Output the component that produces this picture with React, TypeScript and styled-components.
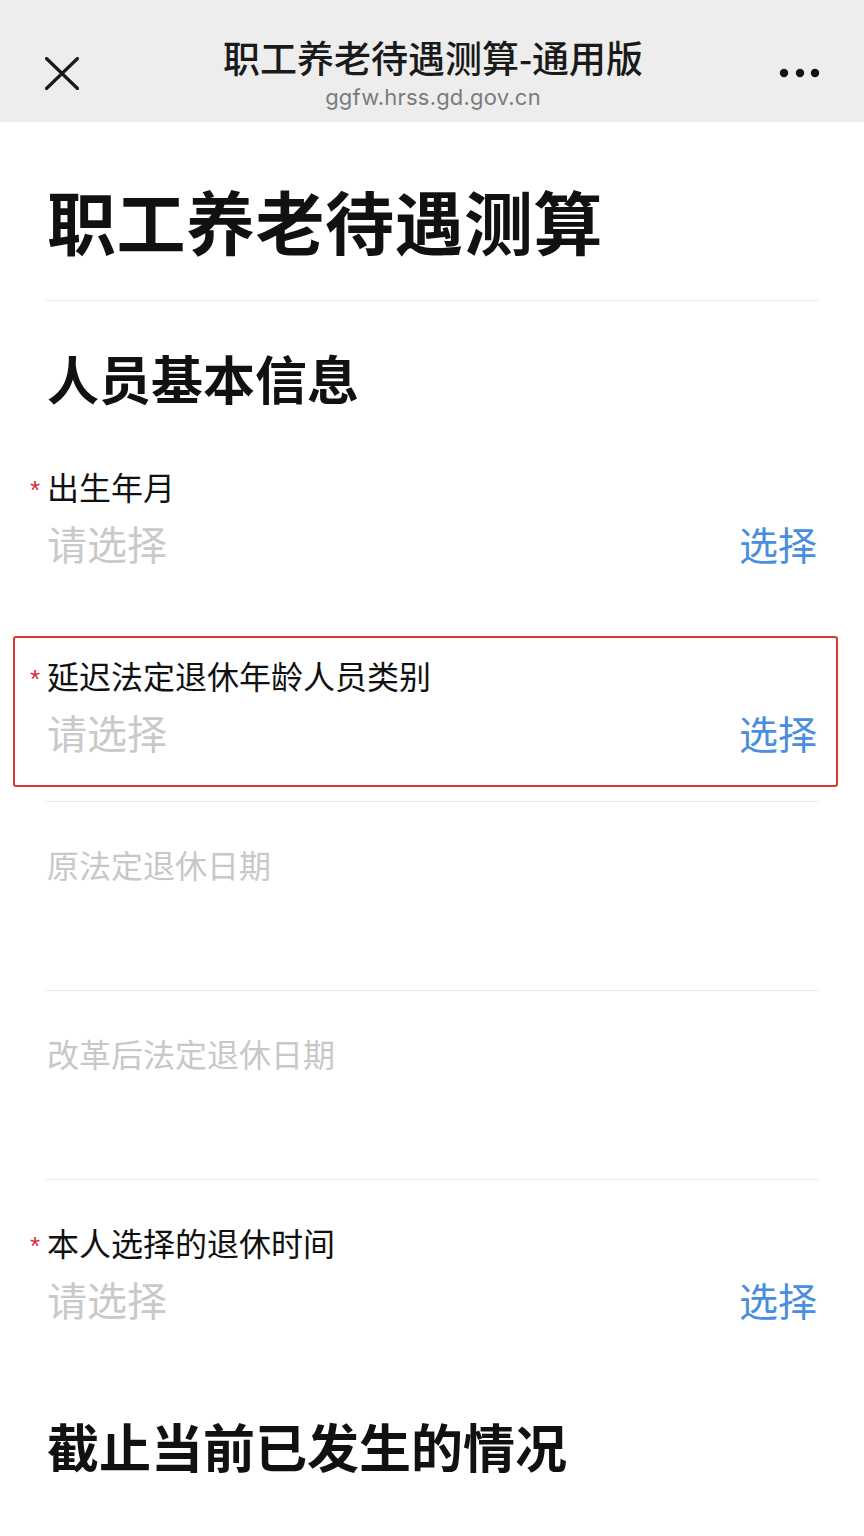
import React from "react";
import styled, { createGlobalStyle } from "styled-components";

const GlobalStyle = createGlobalStyle`
  html, body {
    margin: 0;
    padding: 0;
    background: #ffffff;
  }
  body {
    font-family: "Noto Sans CJK SC", "Noto Sans", sans-serif;
    color: #111111;
  }
  * { box-sizing: border-box; }
`;

const Page = styled.div`
  width: 864px;
  min-height: 1536px;
  background: #ffffff;
  overflow: hidden;
`;

const NavBar = styled.header`
  height: 122px;
  background: #ededed;
  display: grid;
  grid-template-columns: 48px 1fr 48px;
  align-items: start;
  padding: 0 40px 0 42px;
`;

const IconButton = styled.div<{ $align: "start" | "center" }>`
  width: 48px;
  height: 48px;
  display: flex;
  align-items: center;
  justify-content: ${(p) => (p.$align === "start" ? "flex-start" : "center")};
  padding-left: ${(p) => (p.$align === "start" ? "3px" : "0")};
  margin-top: 49px;
`;

const NavTitleBlock = styled.div`
  display: flex;
  flex-direction: column;
  align-items: center;
  padding-top: 38px;
`;

const NavTitle = styled.div`
  font-family: "Noto Sans CJK SC", sans-serif;
  font-size: 37px;
  line-height: 38px;
  font-weight: 500;
  color: #1a1a1a;
  white-space: nowrap;
`;

const NavUrl = styled.div`
  margin-top: 8px;
  font-family: "Inter", "Roboto", sans-serif;
  font-size: 22px;
  line-height: 26px;
  color: #7b7b7b;
  letter-spacing: 0.2px;
`;

const Content = styled.main`
  padding: 0 45px;
`;

const PageTitle = styled.h1`
  margin: 0;
  padding: 64px 0 45px 2px;
  font-size: 69px;
  line-height: 69px;
  font-weight: 700;
  letter-spacing: 0.5px;
  color: #111111;
  border-bottom: 1px solid #eeeeee;
`;

const SectionTitle = styled.h2<{ $top: number }>`
  margin: 0;
  padding: ${(p) => p.$top}px 0 20px 2px;
  font-size: 52px;
  line-height: 52px;
  font-weight: 700;
  color: #111111;
`;

const Field = styled.div<{ $divider: boolean }>`
  position: relative;
  padding: 46px 0 49px 2px;
  border-bottom: 1px solid ${(p) => (p.$divider ? "#ececec" : "transparent")};
`;

const Label = styled.div<{ $muted?: boolean }>`
  display: flex;
  align-items: flex-start;
  height: 32px;
  font-size: 32px;
  line-height: 32px;
  color: ${(p) => (p.$muted ? "#c8c8c8" : "#111111")};
`;

const Star = styled.span`
  flex: none;
  width: 17px;
  margin-left: -17px;
  padding-top: 9px;
  height: 32px;
  color: #d8283a;
  font-family: "Liberation Sans", sans-serif;
  font-size: 26px;
  line-height: 23px;
  text-align: left;
  overflow: visible;
`;

const ValueRow = styled.div`
  margin-top: 21px;
  height: 40px;
  display: flex;
  justify-content: space-between;
  align-items: center;
`;

const Placeholder = styled.span`
  font-size: 40px;
  line-height: 40px;
  color: #c9c9c9;
`;

const PickButton = styled.span`
  font-size: 39px;
  line-height: 40px;
  color: #4a8ee0;
  margin-right: 2px;
`;

const Highlight = styled.div`
  position: absolute;
  top: 23px;
  left: -32px;
  right: -19px;
  height: 151px;
  border: 2.5px solid #d63a2e;
  border-radius: 3px;
  pointer-events: none;
`;

type FieldDef = {
  label: string;
  required: boolean;
  selectable: boolean;
  divider: boolean;
  highlight?: boolean;
};

const fields: FieldDef[] = [
  { label: "出生年月", required: true, selectable: true, divider: false },
  {
    label: "延迟法定退休年龄人员类别",
    required: true,
    selectable: true,
    divider: true,
    highlight: true,
  },
  { label: "原法定退休日期", required: false, selectable: false, divider: true },
  { label: "改革后法定退休日期", required: false, selectable: false, divider: true },
  { label: "本人选择的退休时间", required: true, selectable: true, divider: false },
];

const CloseIcon = () => (
  <svg width="34" height="33" viewBox="0 0 34 33">
    <path
      d="M1.5 1.5 L32.5 31.5 M32.5 1.5 L1.5 31.5"
      stroke="#1a1a1a"
      strokeWidth="3.2"
      strokeLinecap="round"
    />
  </svg>
);

const MoreIcon = () => (
  <svg width="44" height="12" viewBox="0 0 44 12">
    <circle cx="6" cy="6" r="4.2" fill="#111" />
    <circle cx="22" cy="6" r="4.2" fill="#111" />
    <circle cx="37" cy="6" r="4.2" fill="#111" />
  </svg>
);

export default function App() {
  return (
    <Page>
      <GlobalStyle />
      <NavBar>
        <IconButton $align="start">
          <CloseIcon />
        </IconButton>
        <NavTitleBlock>
          <NavTitle>职工养老待遇测算-通用版</NavTitle>
          <NavUrl>ggfw.hrss.gd.gov.cn</NavUrl>
        </NavTitleBlock>
        <IconButton $align="center">
          <MoreIcon />
        </IconButton>
      </NavBar>
      <Content>
        <PageTitle>职工养老待遇测算</PageTitle>
        <SectionTitle $top={51}>人员基本信息</SectionTitle>
        {fields.map((f) => (
          <Field key={f.label} $divider={f.divider}>
            {f.highlight && <Highlight />}
            <Label $muted={!f.required}>
              {f.required && <Star>*</Star>}
              {f.label}
            </Label>
            <ValueRow>
              {f.selectable && (
                <>
                  <Placeholder>请选择</Placeholder>
                  <PickButton>选择</PickButton>
                </>
              )}
            </ValueRow>
          </Field>
        ))}
        <SectionTitle $top={51}>截止当前已发生的情况</SectionTitle>
      </Content>
    </Page>
  );
}
